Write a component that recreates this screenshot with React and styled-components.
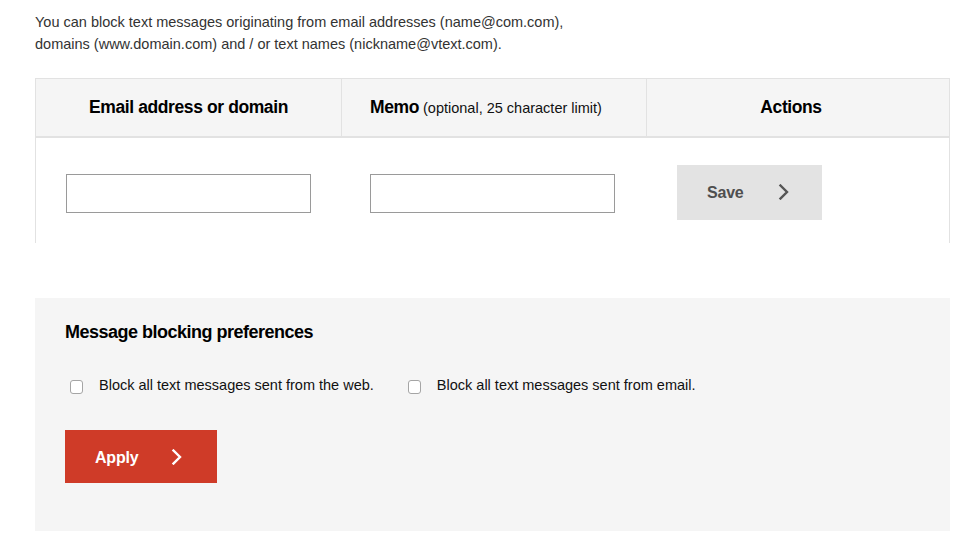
import React from "react";
import styled, { createGlobalStyle } from "styled-components";

const Global = createGlobalStyle`
  html, body { margin: 0; padding: 0; background: #fff; }
  body { font-family: "Liberation Sans", Arial, sans-serif; color: #222; }
  * { box-sizing: border-box; }
`;

const Page = styled.div`
  width: 950px;
  padding: 11px 0 0 35px;
`;

const Intro = styled.p`
  margin: 0 0 23px;
  font-size: 14.5px;
  line-height: 22px;
  color: #333;
`;

const Table = styled.div`
  width: 915px;
`;

const HeaderRow = styled.div`
  display: grid;
  grid-template-columns: 305px 305px 305px;
  background: #f5f5f5;
  border: 1px solid #e2e2e2;
  border-bottom: 2px solid #e2e2e2;
`;

const HeadCell = styled.div`
  height: 57px;
  display: flex;
  align-items: center;
  justify-content: center;
  padding-right: ${(p) => p.$shift || 0}px;
  font-size: 17.5px;
  font-weight: 700;
  letter-spacing: -0.4px;
  color: #000;
  & + & { border-left: 1px solid #e2e2e2; }
`;

const HeadNote = styled.span`
  font-size: 14.5px;
  font-weight: 400;
  letter-spacing: 0;
  margin-left: 4px;
  color: #111;
`;

const BodyRow = styled.div`
  display: grid;
  grid-template-columns: 305px 305px 305px;
  height: 105px;
  border-left: 1px solid #e2e2e2;
  border-right: 1px solid #e2e2e2;
`;

const BodyCell = styled.div`
  display: flex;
  align-items: center;
  padding-left: ${(p) => p.$pad}px;
`;

const TextInput = styled.input`
  width: 245px;
  height: 39px;
  border: 1px solid #9a9a9a;
  border-radius: 0;
  background: #fff;
  padding: 0 8px;
  font: inherit;
  font-size: 14px;
  margin-top: 6px;
  outline: none;
`;

const Button = styled.button`
  display: flex;
  align-items: center;
  gap: ${(p) => p.$gap}px;
  width: ${(p) => p.$w}px;
  height: ${(p) => p.$h}px;
  margin-top: ${(p) => p.$mt || 0}px;
  padding: 2px 0 0 30px;
  border: none;
  border-radius: 0;
  background: ${(p) => p.$bg};
  color: ${(p) => p.$fg};
  font-family: "Liberation Sans", Arial, sans-serif;
  font-size: 16px;
  font-weight: 700;
  letter-spacing: -0.2px;
  cursor: pointer;
  svg { display: block; margin-top: -2px; }
`;

const Panel = styled.div`
  margin-top: 55px;
  width: 915px;
  height: 233px;
  background: #f5f5f5;
  padding: 23px 30px 0;
`;

const PanelTitle = styled.h2`
  margin: 0;
  font-size: 18px;
  line-height: 22px;
  font-weight: 700;
  letter-spacing: -0.5px;
  color: #000;
`;

const Options = styled.div`
  display: flex;
  align-items: center;
  margin: 33px 0 36px 5px;
  gap: 34px;
`;

const Option = styled.label`
  display: flex;
  align-items: center;
  gap: 16px;
  font-size: 14.5px;
  line-height: 18px;
  color: #111;
`;

const Check = styled.input.attrs({ type: "checkbox" })`
  appearance: none;
  margin: 4px 0 0;
  width: 13px;
  height: 14px;
  border: 1px solid #a5a5a5;
  border-radius: 3px;
  background: #fff;
`;

const Chevron = ({ color, w = 12, h = 16 }) => (
  <svg width={w} height={h} viewBox="0 0 12 16" fill="none">
    <path d="M2.5 1.5 L9 8 L2.5 14.5" stroke={color} strokeWidth="2.4" strokeLinecap="square" />
  </svg>
);

export default function App() {
  return (
    <>
      <Global />
      <Page>
        <Intro>
          You can block text messages originating from email addresses (name@com.com),
          <br />
          domains (www.domain.com) and / or text names (nickname@vtext.com).
        </Intro>
        <Table>
          <HeaderRow>
            <HeadCell>Email address or domain</HeadCell>
            <HeadCell $shift={16}>
              Memo<HeadNote>(optional, 25 character limit)</HeadNote>
            </HeadCell>
            <HeadCell $shift={16}>Actions</HeadCell>
          </HeaderRow>
          <BodyRow>
            <BodyCell $pad={30}>
              <TextInput type="text" />
            </BodyCell>
            <BodyCell $pad={29}>
              <TextInput type="text" />
            </BodyCell>
            <BodyCell $pad={31}>
              <Button $w={145} $h={55} $gap={34} $mt={3} $bg="#e3e3e3" $fg="#4f4f4f">
                Save
                <Chevron color="#555" />
              </Button>
            </BodyCell>
          </BodyRow>
        </Table>
        <Panel>
          <PanelTitle>Message blocking preferences</PanelTitle>
          <Options>
            <Option>
              <Check />
              Block all text messages sent from the web.
            </Option>
            <Option>
              <Check />
              Block all text messages sent from email.
            </Option>
          </Options>
          <Button $w={152} $h={53} $gap={33} $bg="#cf3b28" $fg="#fff">
            Apply
            <Chevron color="#fff" />
          </Button>
        </Panel>
      </Page>
    </>
  );
}
